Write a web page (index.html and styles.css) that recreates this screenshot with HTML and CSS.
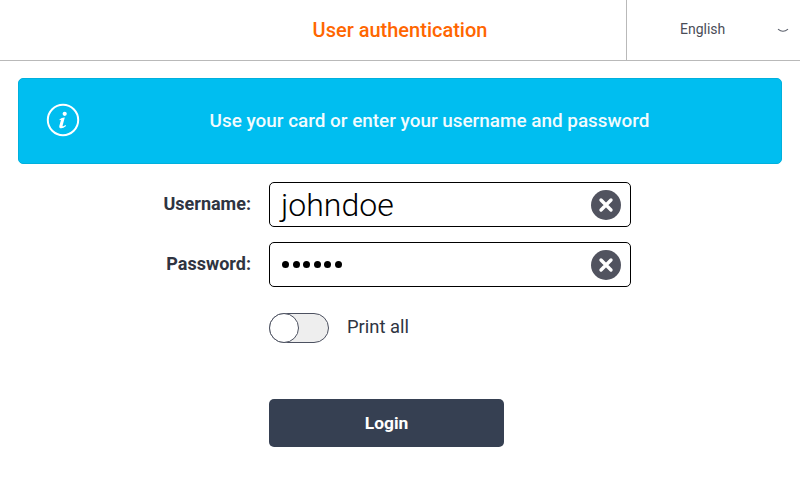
FILE: index.html
```html
<!DOCTYPE html>
<html lang="en">
  <head>
    <meta charset="UTF-8" />
    <meta name="viewport" content="width=device-width, initial-scale=1.0" />
    <title>User authentication</title>
    <link rel="stylesheet" href="styles.css">
  </head>

  <body>
    <header class="topbar">
      <h1 class="title">User authentication</h1>
      <div class="lang">
        <span class="lang-name">English</span>
        <svg class="lang-arrow" width="12" height="6" viewBox="0 0 12 6">
          <path d="M1 1.2 Q6 5.4 11 1.2" fill="none" stroke="#5a5f6b" stroke-width="1.1" />
        </svg>
      </div>
    </header>

    <div class="notice">
      <svg class="notice-icon" width="34" height="34" viewBox="0 0 34 34">
        <circle cx="17" cy="17" r="15.2" fill="none" stroke="#fff" stroke-width="2" />
        <circle cx="18.7" cy="10.8" r="2.1" fill="#fff" />
        <path d="M13.4 16.4 Q16 14.4 18.8 14.6 L16.6 22.4 Q16.4 23.6 17.4 23.2 L19.6 22 L20 22.9 Q17.4 25.3 15.2 25.3 Q12.9 25.3 13.3 23 L14.9 17.2 Q14.8 16.5 13.8 17.2 Z" fill="#fff" />
      </svg>
      <p class="notice-text">Use your card or enter your username and password</p>
    </div>

    <form class="login">
      <div class="field">
        <label class="field-label">Username:</label>
        <div class="input-box">
          <span class="input-value">johndoe</span>
          <svg class="clear" width="30" height="30" viewBox="0 0 30 30">
            <circle cx="15" cy="15" r="15" fill="#51535f" />
            <path d="M10 10 L20 20 M20 10 L10 20" stroke="#fff" stroke-width="3.4" stroke-linecap="round" />
          </svg>
        </div>
      </div>
      <div class="field">
        <label class="field-label">Password:</label>
        <div class="input-box">
          <span class="input-dots">
            <i class="dot"></i><i class="dot"></i><i class="dot"></i><i class="dot"></i><i class="dot"></i><i class="dot"></i>
          </span>
          <svg class="clear" width="30" height="30" viewBox="0 0 30 30">
            <circle cx="15" cy="15" r="15" fill="#51535f" />
            <path d="M10 10 L20 20 M20 10 L10 20" stroke="#fff" stroke-width="3.4" stroke-linecap="round" />
          </svg>
        </div>
      </div>
      <div class="print-row">
        <span class="toggle"><span class="knob"></span></span>
        <span class="print-label">Print all</span>
      </div>
      <button class="login-btn" type="button">Login</button>
    </form>
  </body>
</html>
```

FILE: styles.css
```css
* {
  box-sizing: border-box;
  margin: 0;
  padding: 0;
}

body {
  font-family: Roboto, "Liberation Sans", sans-serif;
  background-color: #fff;
  width: 800px;
  height: 480px;
  overflow: hidden;
}

.topbar {
  display: flex;
  height: 61px;
  border-bottom: 1px solid #b9b9b9;
}

.title {
  flex: 1;
  font-size: 20px;
  font-weight: 500;
  line-height: 60px;
  color: #ff6600;
  text-align: center;
  padding-left: 174px;
}

.lang {
  display: flex;
  align-items: center;
  width: 174px;
  padding-left: 53px;
  border-left: 1px solid #b9b9b9;
}

.lang-name {
  font-size: 14px;
  color: #4a4d57;
  margin-top: -2px;
}

.lang-arrow {
  margin-left: 52px;
  margin-top: 2px;
}

.notice {
  display: flex;
  align-items: center;
  height: 86px;
  margin: 17px 18px 0;
  padding-left: 27px;
  padding-bottom: 2px;
  background-color: #00bef0;
  border: 1px solid #00b0dd;
  border-radius: 5px;
}

.notice-text {
  flex: 1;
  height: 24px;
  margin-top: 2px;
  line-height: 24px;
  padding-right: 2px;
  font-size: 18.9px;
  font-weight: 500;
  color: #fff;
  text-align: center;
  opacity: 0.95;
}

.login {
  display: flex;
  flex-direction: column;
  margin-top: 18px;
}

.field {
  display: flex;
  gap: 18px;
  margin-bottom: 15px;
}

.field-label {
  width: 251px;
  font-size: 18px;
  font-weight: 700;
  line-height: 44px;
  color: #2f3441;
  text-align: right;
}

.input-box {
  display: flex;
  align-items: center;
  justify-content: space-between;
  width: 362px;
  height: 45px;
  padding: 0 9px 0 10px;
  border: 1px solid #000;
  border-radius: 5px;
}

.input-value {
  font-size: 32px;
  font-weight: 300;
  color: #000;
  margin-left: 1px;
}

.input-dots {
  display: flex;
  gap: 3.6px;
  margin-left: 2px;
}

.dot {
  width: 7px;
  height: 7px;
  border-radius: 50%;
  background-color: #000;
}

.print-row {
  display: flex;
  align-items: center;
  margin: 11px 0 0 269px;
}

.toggle {
  display: block;
  width: 60px;
  height: 30px;
  background-color: #eee;
  border: 1px solid #4c5160;
  border-radius: 15px;
}

.knob {
  display: block;
  width: 30px;
  height: 30px;
  margin: -1px;
  background-color: #fff;
  border: 1px solid #4c5160;
  border-radius: 50%;
}

.print-label {
  margin-left: 18px;
  margin-top: -3px;
  font-size: 18.4px;
  color: #2f3441;
}

.login-btn {
  width: 235px;
  height: 48px;
  margin: 56px 0 0 269px;
  background-color: #364052;
  border: none;
  border-radius: 5px;
  font-family: inherit;
  font-size: 17.4px;
  font-weight: 700;
  color: #fff;
}
```
